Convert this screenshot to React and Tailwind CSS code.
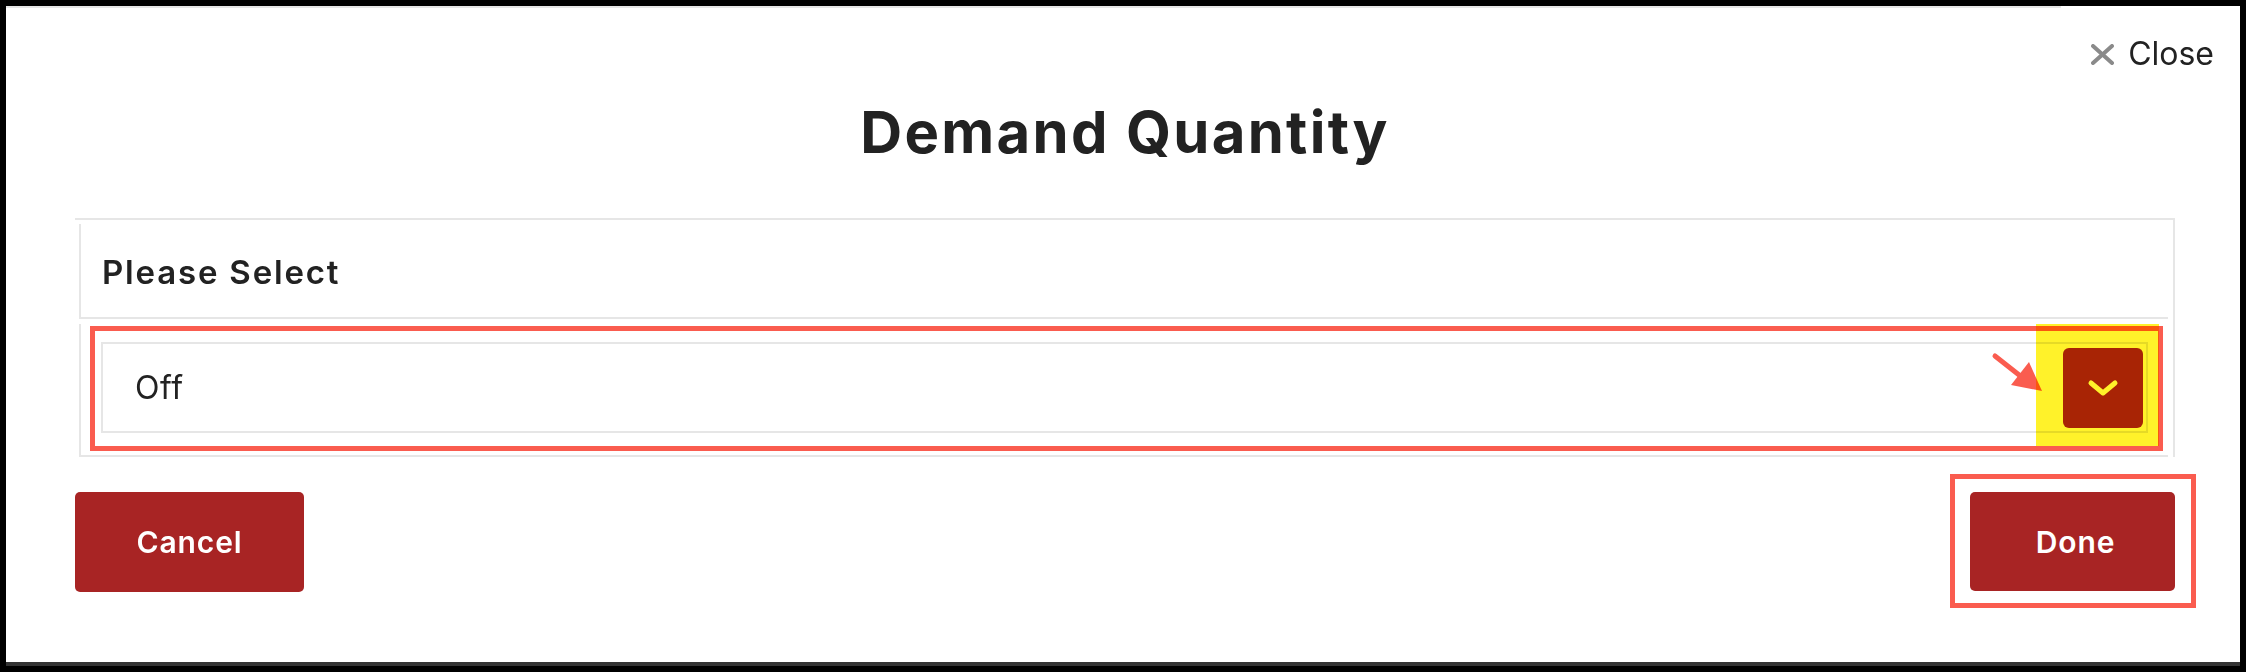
import React from "react";

export default function App() {
  return (
    <div
      className="w-[2246px] h-[672px] bg-black p-[6px] flex"
      style={{ fontFamily: "Inter, 'Noto Sans', sans-serif" }}
    >
      <div className="flex-1 h-full bg-white border-b-[4px] border-[#333333] flex flex-col">
        {/* faint top line */}
        <div className="h-[2px] w-[2055px] bg-[#e6e6e6]" />

        {/* Close row */}
        <div className="flex justify-end items-center pr-[26px] pt-[30px] text-[#222222]">
          <div className="flex items-center gap-[14px]">
            <svg width="23" height="21" viewBox="0 0 23 21" className="block">
              <line x1="2" y1="2" x2="21" y2="19" stroke="#8a8a8a" strokeWidth="4" strokeLinecap="round" />
              <line x1="21" y1="2" x2="2" y2="19" stroke="#8a8a8a" strokeWidth="4" strokeLinecap="round" />
            </svg>
            <span className="text-[32px] leading-none font-normal">Close</span>
          </div>
        </div>

        {/* Title + panel + buttons */}
        <div className="pl-[69px] pr-[65px] flex flex-col">
          <h1 className="mt-[33px] mb-[2px] text-center text-[58px] leading-none font-bold tracking-[0.04em] text-[#222222]">
            Demand Quantity
          </h1>

          {/* Panel */}
          <div className="mt-[55px] border-t-2 border-r-2 border-[#e6e6e6] flex flex-col">
            <div className="ml-[4px] mr-[5px] mt-[4px] h-[95px] border-l-2 border-b-2 border-[#e6e6e6] flex items-center pl-[21px] pt-[3px]">
              <span className="text-[33px] leading-none font-semibold tracking-[0.055em] text-[#222222]">
                Please Select
              </span>
            </div>
            <div className="ml-[4px] mr-[5px] mt-[5px] h-[133px] border-l-2 border-b-2 border-[#e6e6e6] pl-[9px] pr-[5px] pt-[2px]">
              {/* red highlight wrapper */}
              <div className="relative border-[5px] border-[#fa5c4f] pl-[6px] pr-[10px] pt-[11px] pb-[13px]">
                <div className="h-[91px] border-2 border-[#e6e6e6] flex items-center justify-between pl-[32px] pr-[3px]">
                  <span className="text-[32px] leading-none font-normal tracking-[0.02em] text-[#222222]">Off</span>
                  <div className="w-[80px] h-[80px] rounded-[6px] bg-[#a8261c] flex items-center justify-center mt-[1px]">
                    <svg width="80" height="80" viewBox="0 0 80 80" className="block">
                      <polyline
                        points="28,35 40,45 52,35"
                        fill="none"
                        stroke="#ffffff"
                        strokeWidth="5"
                        strokeLinecap="round"
                        strokeLinejoin="round"
                      />
                    </svg>
                  </div>
                </div>

                {/* arrow annotation */}
                <svg
                  width="60"
                  height="45"
                  viewBox="0 0 60 45"
                  className="absolute left-[1895px] top-[20px] block"
                >
                  <line x1="5" y1="5" x2="38" y2="31" stroke="#fa5c4f" strokeWidth="5" strokeLinecap="round" />
                  <polygon points="21,34 39,11 52,40" fill="#fa5c4f" />
                </svg>

                {/* yellow highlighter */}
                <div className="absolute right-[-1px] top-[-7px] w-[123px] h-[122px] bg-[#fff22a] mix-blend-multiply" />
              </div>
            </div>
          </div>

          {/* Buttons */}
          <div className="mt-[35px] flex justify-between items-start">
            <button className="w-[229px] h-[100px] rounded-[5px] bg-[#a82424] text-white text-[30px] leading-none font-semibold tracking-[0.03em] flex items-center justify-center">
              Cancel
            </button>
            <div className="relative">
              <button className="w-[205px] h-[99px] rounded-[5px] bg-[#a82424] text-white text-[30px] leading-none font-semibold tracking-[0.03em] flex items-center justify-center pl-[6px]">
                Done
              </button>
              <div className="absolute left-[-20px] right-[-21px] top-[-18px] bottom-[-17px] border-[5px] border-[#fa5c4f] pointer-events-none" />
            </div>
          </div>
        </div>
      </div>
    </div>
  );
}
